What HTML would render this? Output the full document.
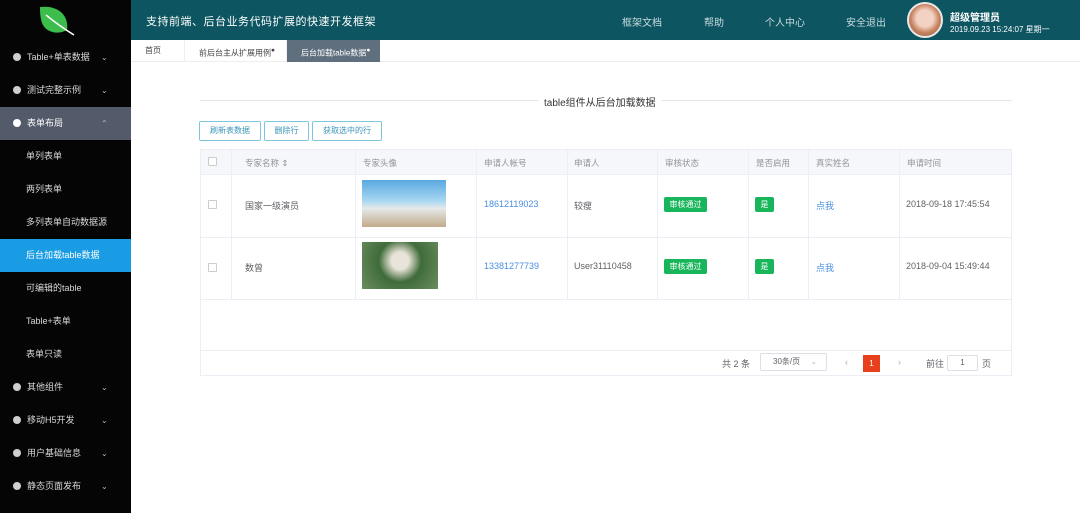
<!DOCTYPE html>
<html><head><meta charset="utf-8"><style>
*{margin:0;padding:0;box-sizing:border-box}
body{width:1080px;height:513px;overflow:hidden;font-family:"Liberation Sans","Noto Sans CJK SC",sans-serif;font-size:9px;color:#606266;background:#fff;position:relative}
.side{position:absolute;left:0;top:0;width:131px;height:513px;background:#050505}
.logo{position:absolute;left:36px;top:5px}
.mi{position:absolute;left:0;width:131px;height:33px;line-height:33px;color:#d8d8d8;font-size:9px}
.mi .dot{position:absolute;left:13px;top:12px;width:8px;height:8px;border-radius:50%;background:#cfcfcf}
.mi .t{position:absolute;left:27px}
.mi .ar{position:absolute;left:101px;top:0;font-size:8px;color:#bbb}
.sub .t{left:26px}
.hd{position:absolute;left:131px;top:0;width:949px;height:40px;background:#0c5561;color:#fff}
.hd .ti{position:absolute;left:15px;top:13px;font-size:11px;letter-spacing:.5px}
.hd .n{position:absolute;top:14px;font-size:10px;color:#c9dbde}
.tabs{position:absolute;left:131px;top:40px;width:949px;height:22px;background:#fff;border-bottom:1px solid #eee}
.tab{position:absolute;top:0;height:22px;line-height:22px;font-size:8px;color:#444;padding-left:14px}
.btn{position:absolute;top:121px;height:20px;line-height:18px;border:1px solid #7cc7dc;border-radius:2px;color:#3a96b8;font-size:8px;text-align:center;background:#fff}
.tbl{position:absolute;left:200px;top:149px;width:812px;height:227px;border:1px solid #ebeef5}
.hl{position:absolute;left:0;width:810px;height:1px;background:#ebeef5}
.vl{position:absolute;top:0;width:1px;height:149px;background:#ebeef5}
.c{position:absolute;font-size:9px}
.th{top:7px;color:#909399;font-size:8.5px}
.cb{position:absolute;left:7px;width:9px;height:9px;border:1px solid #ccc;border-radius:1px;background:#fff}
.tag{position:absolute;background:#19b55b;color:#fff;font-size:8px;height:15px;line-height:15px;border-radius:2px;text-align:center}
.lnk{color:#4a8fe0}
</style></head><body>
<div class="side">
<svg class="logo" width="40" height="34" viewBox="0 0 40 34"><path d="M4 2 C22 0 33 10 31 25 C22 30 10 28 6 18 C4 12 4 6 4 2Z" fill="#3cbd4c"/><path d="M10 10 Q22 20 38 30" stroke="#fff" stroke-width="1.5" fill="none"/></svg>
<div class="mi" style="top:41px"><span class="dot"></span><span class="t">Table+单表数据</span><span class="ar">⌄</span></div>
<div class="mi" style="top:74px"><span class="dot"></span><span class="t">测试完整示例</span><span class="ar">⌄</span></div>
<div class="mi" style="top:107px;background:#535a69;color:#fff"><span class="dot" style="background:#fff"></span><span class="t">表单布局</span><span class="ar">⌃</span></div>
<div class="mi sub" style="top:140px"><span class="t">单列表单</span></div>
<div class="mi sub" style="top:173px"><span class="t">两列表单</span></div>
<div class="mi sub" style="top:206px"><span class="t">多列表单自动数据源</span></div>
<div class="mi sub" style="top:239px;background:#1a9ce4;color:#fff"><span class="t">后台加载table数据</span></div>
<div class="mi sub" style="top:272px"><span class="t">可编辑的table</span></div>
<div class="mi sub" style="top:305px"><span class="t">Table+表单</span></div>
<div class="mi sub" style="top:338px"><span class="t">表单只读</span></div>
<div class="mi" style="top:371px"><span class="dot"></span><span class="t">其他组件</span><span class="ar">⌄</span></div>
<div class="mi" style="top:404px"><span class="dot"></span><span class="t">移动H5开发</span><span class="ar">⌄</span></div>
<div class="mi" style="top:437px"><span class="dot"></span><span class="t">用户基础信息</span><span class="ar">⌄</span></div>
<div class="mi" style="top:470px"><span class="dot"></span><span class="t">静态页面发布</span><span class="ar">⌄</span></div>
</div>
<div class="hd">
<div class="ti">支持前端、后台业务代码扩展的快速开发框架</div>
<span class="n" style="left:491px">框架文档</span>
<span class="n" style="left:573px">帮助</span>
<span class="n" style="left:634px">个人中心</span>
<span class="n" style="left:715px">安全退出</span>
<div style="position:absolute;left:776px;top:2px;width:36px;height:36px;border-radius:50%;background:radial-gradient(circle at 50% 45%,#f3d2c4 0 35%,#c7825e 60%,#8a5a40 100%);border:2px solid #e8e8e8"></div>
<div style="position:absolute;left:819px;top:9px;font-size:10px;font-weight:bold">超级管理员</div>
<div style="position:absolute;left:819px;top:24px;font-size:8px">2019.09.23 15:24:07 星期一</div>
</div>
<div class="tabs">
<div class="tab" style="left:0;width:54px;border-right:1px solid #eee">首页</div>
<div class="tab" style="left:54px;width:102px;border-right:1px solid #eee">前后台主从扩展用例<sup>●</sup></div>
<div class="tab" style="left:156px;width:93px;background:#5f6f7e;color:#fff">后台加载table数据<sup>●</sup></div>
</div>
<div style="position:absolute;left:200px;top:100px;width:812px;height:1px;background:#e4e4e4"></div>
<div style="position:absolute;left:538px;top:94px;background:#fff;padding:0 6px;font-size:10px;color:#333">table组件从后台加载数据</div>
<div class="btn" style="left:199px;width:62px">刷新表数据</div>
<div class="btn" style="left:264px;width:45px">删除行</div>
<div class="btn" style="left:312px;width:70px">获取选中的行</div>
<div class="tbl">
<div style="position:absolute;left:0;top:0;width:810px;height:24px;background:#f5f7fa"></div>
<div class="hl" style="top:24px"></div><div class="hl" style="top:87px"></div><div class="hl" style="top:149px"></div><div class="hl" style="top:200px"></div>
<div class="vl" style="left:30px"></div><div class="vl" style="left:154px"></div><div class="vl" style="left:275px"></div><div class="vl" style="left:366px"></div><div class="vl" style="left:456px"></div><div class="vl" style="left:547px"></div><div class="vl" style="left:607px"></div><div class="vl" style="left:698px"></div>
<div class="cb" style="top:7px"></div><div class="cb" style="top:50px"></div><div class="cb" style="top:113px"></div>
<span class="c th" style="left:44px">专家名称 ⇕</span><span class="c th" style="left:162px">专家头像</span><span class="c th" style="left:283px">申请人帐号</span><span class="c th" style="left:373px">申请人</span><span class="c th" style="left:464px">审核状态</span><span class="c th" style="left:555px">是否启用</span><span class="c th" style="left:615px">真实姓名</span><span class="c th" style="left:706px">申请时间</span>
<div style="position:absolute;left:161px;top:30px;width:84px;height:47px;background:linear-gradient(#5aa8e0 0,#a9d8f0 45%,#e4e9ea 60%,#c2ab8a 100%)"></div>
<div style="position:absolute;left:161px;top:92px;width:76px;height:47px;background:radial-gradient(circle at 50% 40%,#e9e4d9 0 18%,#3f6b3a 45%,#6c8d5f 100%)"></div>
<span class="c" style="left:44px;top:49px">国家一级演员</span><span class="c lnk" style="left:283px;top:49px">18612119023</span><span class="c" style="left:373px;top:49px">较瘦</span>
<div class="tag" style="left:463px;top:47px;width:43px">审核通过</div><div class="tag" style="left:554px;top:47px;width:19px">是</div>
<span class="c lnk" style="left:615px;top:49px">点我</span><span class="c" style="left:705px;top:49px">2018-09-18 17:45:54</span>
<span class="c" style="left:44px;top:111px">数曾</span><span class="c lnk" style="left:283px;top:111px">13381277739</span><span class="c" style="left:373px;top:111px">User31110458</span>
<div class="tag" style="left:463px;top:109px;width:43px">审核通过</div><div class="tag" style="left:554px;top:109px;width:19px">是</div>
<span class="c lnk" style="left:615px;top:111px">点我</span><span class="c" style="left:705px;top:111px">2018-09-04 15:49:44</span>
<span class="c" style="left:521px;top:207px">共 2 条</span>
<div style="position:absolute;left:559px;top:203px;width:67px;height:18px;border:1px solid #dcdfe6;border-radius:2px;font-size:8px;line-height:16px;padding-left:12px">30条/页 <span style="color:#bbb;margin-left:8px">⌄</span></div>
<span class="c" style="left:644px;top:207px;color:#aaa">‹</span>
<div style="position:absolute;left:662px;top:205px;width:17px;height:17px;background:#e8401c;color:#fff;font-size:8px;text-align:center;line-height:17px">1</div>
<span class="c" style="left:697px;top:207px;color:#aaa">›</span>
<span class="c" style="left:725px;top:207px">前往</span>
<div style="position:absolute;left:746px;top:205px;width:31px;height:16px;border:1px solid #dcdfe6;border-radius:2px;text-align:center;line-height:14px;font-size:8px">1</div>
<span class="c" style="left:781px;top:207px">页</span>
</div>
</body></html>
